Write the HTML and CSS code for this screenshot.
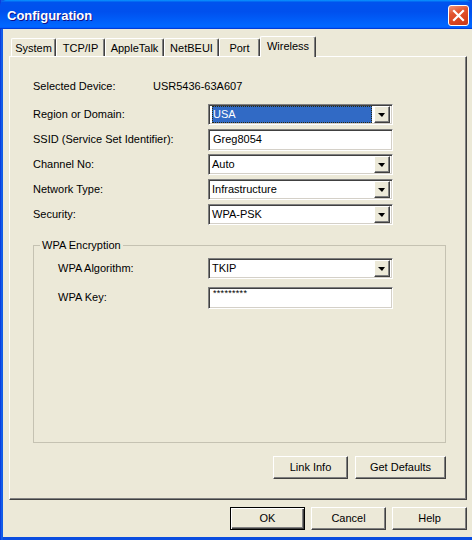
FILE: index.html
```html
<!DOCTYPE html>
<html>
<head>
<meta charset="utf-8">
<title>Configuration</title>
<link rel="stylesheet" href="styles.css">
</head>
<body>
<div class="window">
  <div class="titlebar">
    <span class="title">Configuration</span>
    <span class="close"><svg width="19" height="19" viewBox="0 0 19 19"><path d="M5 5 L14 14 M14 5 L5 14" stroke="#fff" stroke-width="2.2" stroke-linecap="square"/></svg></span>
  </div>
  <div class="client">
    <div class="tabs">
      <div class="tab t-system">System</div>
      <div class="tab t-tcp">TCP/IP</div>
      <div class="tab t-apple">AppleTalk</div>
      <div class="tab t-netbeui">NetBEUI</div>
      <div class="tab t-port">Port</div>
      <div class="tab t-wireless active">Wireless</div>
    </div>
    <div class="panel">
      <div class="device-row"><span class="device-label">Selected Device:</span><span>USR5436-63A607</span></div>
      <div class="form-grid">
        <span class="lbl">Region or Domain:</span>
        <div class="combo"><span class="combo-text"><span class="sel">USA</span></span><span class="drop"></span></div>
        <span class="lbl">SSID (Service Set Identifier):</span>
        <div class="combo input"><span class="combo-text">Greg8054</span></div>
        <span class="lbl">Channel No:</span>
        <div class="combo"><span class="combo-text">Auto</span><span class="drop"></span></div>
        <span class="lbl">Network Type:</span>
        <div class="combo"><span class="combo-text">Infrastructure</span><span class="drop"></span></div>
        <span class="lbl">Security:</span>
        <div class="combo"><span class="combo-text">WPA-PSK</span><span class="drop"></span></div>
      </div>
      <fieldset class="group">
        <legend>WPA Encryption</legend>
        <div class="form-grid group-grid">
          <span class="lbl">WPA Algorithm:</span>
          <div class="combo"><span class="combo-text">TKIP</span><span class="drop"></span></div>
          <span class="lbl">WPA Key:</span>
          <div class="combo input"><span class="combo-text pw">*********</span></div>
        </div>
      </fieldset>
      <div class="panel-buttons">
        <button class="btn">Link Info</button>
        <button class="btn btn-wide">Get Defaults</button>
      </div>
    </div>
    <div class="dialog-buttons">
      <button class="btn btn-default">OK</button>
      <button class="btn">Cancel</button>
      <button class="btn">Help</button>
    </div>
  </div>
</div>
</body>
</html>
```
FILE: styles.css
```css
* { box-sizing: border-box; }
html, body { margin: 0; padding: 0; }
body {
  font-family: "Liberation Sans", Arial, sans-serif;
  font-size: 11px;
  color: #000;
  background: #ECE9D8;
}
.window {
  width: 472px;
  height: 540px;
  display: flex;
  flex-direction: column;
  background: linear-gradient(90deg, #0831D9 0px, #166AEE 2px, #0A4DE0 3px);
  overflow: hidden;
}
.titlebar {
  height: 29px;
  flex: none;
  display: flex;
  align-items: center;
  justify-content: space-between;
  padding: 1px 3px 0 7px;
  background: linear-gradient(180deg, #0997ff, #0053ee 8%, #0050ee 40%, #06f 88%, #06f 93%, #005bff 95%, #003dd7 96%, #003dd7);
  border-radius: 6px 6px 0 0;
}
.title {
  color: #fff;
  font-weight: bold;
  font-size: 13px;
  text-shadow: 1px 1px #0F1089;
  letter-spacing: 0;
}
.close {
  width: 21px;
  height: 21px;
  border: 1px solid #fff;
  border-radius: 3px;
  background: linear-gradient(160deg, #F0947A 0%, #E2552F 35%, #D8431E 70%, #C8381A 100%);
  display: flex;
  align-items: center;
  justify-content: center;
}
.client {
  flex: 1;
  margin: 0 0 3px 3px;
  background: #ECE9D8;
  padding: 7px 5px 7px 6px;
  display: flex;
  flex-direction: column;
}
.tabs {
  height: 20px;
  flex: none;
  display: flex;
  align-items: flex-end;
  padding-left: 2px;
  position: relative;
  z-index: 1;
}
.tab {
  height: 18px;
  border-top: 1px solid #fff;
  border-left: 1px solid #fff;
  border-right: 1px solid #404040;
  box-shadow: inset -1px 0 #808080;
  border-radius: 2px 2px 0 0;
  display: flex;
  align-items: center;
  justify-content: center;
  padding-top: 1px;
  background: #ECE9D8;
}
.t-system { width: 45px; }
.t-tcp { width: 49px; }
.t-apple { width: 59px; }
.t-netbeui { width: 55px; }
.t-port { width: 41px; }
.t-wireless { width: 56px; }
.tab.active {
  height: 21px;
  margin-bottom: -1px;
  padding-top: 0;
  padding-bottom: 2px;
}
.panel {
  height: 444px;
  flex: none;
  border-top: 1px solid #fff;
  border-left: 1px solid #fff;
  border-right: 1px solid #404040;
  border-bottom: 1px solid #404040;
  box-shadow: inset -1px -1px #808080;
  padding: 23px 20px 0 23px;
  display: flex;
  flex-direction: column;
}
.device-row {
  display: flex;
  height: 13px;
  line-height: 13px;
}
.device-label { width: 120px; }
.form-grid {
  display: grid;
  grid-template-columns: 175px 185px;
  grid-auto-rows: 21px;
  row-gap: 4px;
  align-items: center;
  margin-top: 11px;
}
.lbl { line-height: 13px; }
.combo {
  height: 21px;
  width: 185px;
  background: #fff;
  border: 1px solid;
  border-color: #808080 #fff #fff #808080;
  box-shadow: inset 1px 1px #404040, inset -1px -1px #D4D0C8;
  display: flex;
  align-items: center;
  padding: 2px;
}
.combo.input { height: 22px; padding-left: 3px; }
.combo-text {
  flex: 1;
  height: 17px;
  line-height: 17px;
  display: flex;
  padding-left: 1px;
  white-space: nowrap;
}
.sel {
  flex: 1;
  margin-right: 2px;
  background: #316AC5;
  color: #fff;
  border: 1px dotted #2a2a10;
  line-height: 15px;
  padding-left: 0;
}
.pw {
  font-size: 9px;
  line-height: 9px;
  height: 17px;
  padding-top: 0;
  letter-spacing: 0.3px;
  align-items: flex-start;
}
.drop {
  width: 16px;
  height: 17px;
  flex: none;
  background: #ECE9D8;
  border: 1px solid;
  border-color: #fff #404040 #404040 #fff;
  box-shadow: inset -1px -1px #808080;
  display: flex;
  align-items: center;
  justify-content: center;
  padding-right: 1px;
}
.drop::after {
  content: "";
  border-left: 4px solid transparent;
  border-right: 3px solid transparent;
  border-top: 4px solid #000;
}
.group {
  margin: 14px 0 0 0;
  padding: 0;
  border: 1px solid #C5C2B2;
  width: 413px;
  height: 204px;
  min-width: 0;
}
.group legend {
  padding: 0 2px;
  margin-left: 6px;
  line-height: 13px;
}
.group-grid {
  grid-template-columns: 150px 185px;
  padding-left: 24px;
  row-gap: 8px;
  margin-top: 6px;
}
.panel-buttons {
  display: flex;
  justify-content: flex-end;
  gap: 7px;
  margin-top: 13px;
}
.btn {
  font-family: "Liberation Sans", Arial, sans-serif;
  font-size: 11px;
  color: #000;
  width: 75px;
  height: 23px;
  padding: 0 0 1px 0;
  background: #ECE9D8;
  border: 1px solid;
  border-color: #fff #404040 #404040 #fff;
  box-shadow: inset -1px -1px #808080;
}
.btn-wide { width: 91px; }
.btn-default {
  border: 1px solid #000;
  box-shadow: inset 1px 1px #fff, inset -1px -1px #404040, inset -2px -2px #808080;
}
.dialog-buttons {
  display: flex;
  justify-content: flex-end;
  gap: 6px;
  margin-top: 7px;
}
```
